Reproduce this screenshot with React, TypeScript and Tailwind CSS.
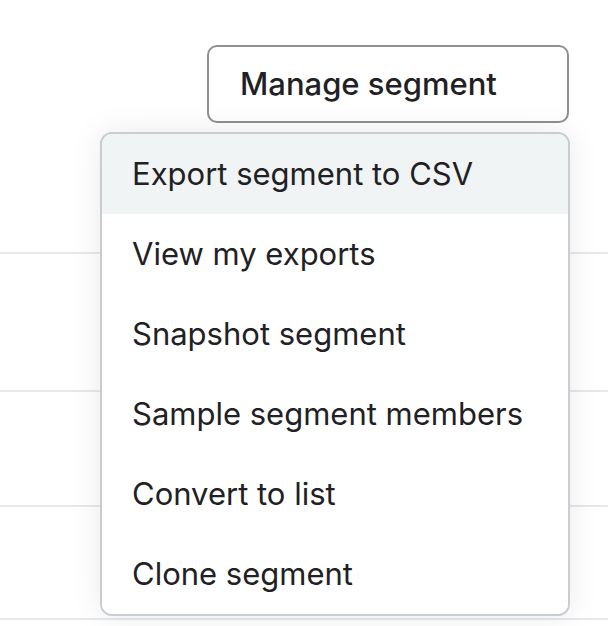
import React from 'react';

const MENU_ITEMS = [
  'Export segment to CSV',
  'View my exports',
  'Snapshot segment',
  'Sample segment members',
  'Convert to list',
  'Clone segment',
];

const App: React.FC = () => {
  return (
    <div
      className="relative w-[608px] h-[626px] overflow-hidden bg-white text-[#1f2124]"
      style={{ fontFamily: 'Inter, "Noto Sans", sans-serif' }}
    >
      {/* page behind the menu */}
      <div className="h-[252px] flex justify-end items-start pt-[45px] pr-[39px]">
        <button className="w-[362px] h-[78px] border-2 border-[#8f8f8f] rounded-[10px] bg-white text-left pl-[31px] text-[31px] font-medium">
          Manage segment
        </button>
      </div>
      <div className="h-[138px] border-t-2 border-[#e6e8eb]" />
      <div className="h-[115px] border-t-2 border-[#e6e8eb]" />
      <div className="h-[113px] border-t-2 border-[#e6e8eb]" />
      <div className="h-[20px] border-t-2 border-[#e6e8eb]" />

      {/* dropdown */}
      <div className="absolute left-[100px] top-[132px] w-[470px] border-2 border-[#c8cdd2] rounded-[12px] bg-white overflow-hidden shadow-[0_0_32px_rgba(0,0,0,0.09)]">
        {MENU_ITEMS.map((item, i) => (
          <div
            key={item}
            className={`h-[80px] flex items-center px-[30px] text-[31px] ${i === 0 ? 'bg-[#f1f4f5]' : 'bg-white'}`}
          >
            {item}
          </div>
        ))}
      </div>
    </div>
  );
};

export default App;
